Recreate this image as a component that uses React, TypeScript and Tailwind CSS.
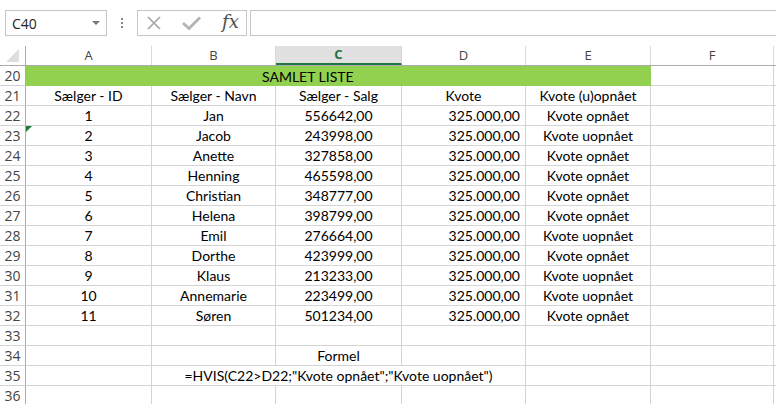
import React from 'react';

type Row = { id: number; name: string; sale: string; reached: boolean };

const rows: Row[] = [
  { id: 1, name: 'Jan', sale: '556642,00', reached: true },
  { id: 2, name: 'Jacob', sale: '243998,00', reached: false },
  { id: 3, name: 'Anette', sale: '327858,00', reached: true },
  { id: 4, name: 'Henning', sale: '465598,00', reached: true },
  { id: 5, name: 'Christian', sale: '348777,00', reached: true },
  { id: 6, name: 'Helena', sale: '398799,00', reached: true },
  { id: 7, name: 'Emil', sale: '276664,00', reached: false },
  { id: 8, name: 'Dorthe', sale: '423999,00', reached: true },
  { id: 9, name: 'Klaus', sale: '213233,00', reached: false },
  { id: 10, name: 'Annemarie', sale: '223499,00', reached: false },
  { id: 11, name: 'Søren', sale: '501234,00', reached: true },
];

const cell = 'h-full shrink-0 border-r border-b border-[#d4d4d4] flex items-center';
const uiFont = "font-['Open_Sans',sans-serif]";

function RowHead({ n }: { n: number }) {
  return (
    <div
      className={`${uiFont} w-[26px] h-full shrink-0 border-r border-r-[#ababab] border-b border-b-[#d4d4d4] flex items-center justify-center text-[14px] text-[#444]`}
    >
      {n}
    </div>
  );
}

function Tail() {
  return <div className="h-full flex-1 border-b border-[#d4d4d4]" />;
}

function FormulaBar() {
  return (
    <div className="h-[46px] relative flex items-start pt-[10px] pl-[5px]">
      <div className={`${uiFont} w-[102px] h-[26px] border border-[#c6c6c6] flex items-center justify-between pl-[6px] pr-[6px] text-[14px] text-[#222]`}>
        <span>C40</span>
        <svg width="8" height="4" viewBox="0 0 8 4">
          <path d="M0 0 L8 0 L4 4 Z" fill="#777" />
        </svg>
      </div>
      <div className="w-[30px] h-[26px] flex flex-col items-center justify-center gap-[2px]">
        <span className="w-[2px] h-[2px] bg-[#888]" />
        <span className="w-[2px] h-[2px] bg-[#888]" />
        <span className="w-[2px] h-[2px] bg-[#888]" />
      </div>
      <div className="w-[110px] h-[26px] border border-[#c6c6c6] flex items-center pl-[9px] gap-[21px]">
        <svg width="14" height="14" viewBox="0 0 14 14">
          <path d="M1 1 L13 13 M13 1 L1 13" stroke="#a6a6a6" strokeWidth="1.7" fill="none" />
        </svg>
        <svg width="19" height="14" viewBox="0 0 19 14">
          <path d="M1 7 L7 12.5 L18 1.5" stroke="#b4b4b4" strokeWidth="2.8" fill="none" />
        </svg>
        <span className="font-['DejaVu_Serif',serif] italic text-[18px] text-[#4d4d4d] leading-none -mt-[2px]">fx</span>
      </div>
      <div className="ml-[3px] flex-1 h-[26px] border-t border-b border-l border-[#c6c6c6]" />
    </div>
  );
}

function ColumnHeader() {
  const cols = [
    { l: 'A', w: 'w-[126px]' },
    { l: 'B', w: 'w-[124px]' },
    { l: 'C', w: 'w-[126px]' },
    { l: 'D', w: 'w-[124px]' },
    { l: 'E', w: 'w-[125px]' },
    { l: 'F', w: 'w-[123px]' },
  ];
  return (
    <div className={`${uiFont} flex h-[20px] border-b border-[#ababab] text-[13px] text-[#444]`}>
      <div className="w-[26px] h-full shrink-0 border-r border-[#ababab] flex items-end justify-center pb-[3px]">
        <svg width="13" height="13" viewBox="0 0 13 13">
          <path d="M13 0 L13 13 L0 13 Z" fill="#dedede" />
        </svg>
      </div>
      {cols.map((c) =>
        c.l === 'C' ? (
          <div
            key={c.l}
            className={`${c.w} h-full shrink-0 border-r border-[#d4d4d4] bg-[#e1e1e1] border-b-2 border-b-[#217346] flex items-center justify-center text-[#217346] font-bold`}
          >
            {c.l}
          </div>
        ) : (
          <div key={c.l} className={`${c.w} h-full shrink-0 border-r border-[#dadada] flex items-center justify-center`}>
            {c.l}
          </div>
        )
      )}
      <div className="flex-1" />
    </div>
  );
}

export default function App() {
  return (
    <div className="w-[776px] h-[404px] overflow-hidden bg-white font-['Lato',sans-serif] text-[14px] text-black">
      <FormulaBar />
      <ColumnHeader />

      <div className="flex h-[20px]">
        <RowHead n={20} />
        <div className="w-[625px] h-full shrink-0 bg-[#92d050] flex items-center pl-[236px]">SAMLET LISTE</div>
        <div className={`${cell} w-[123px]`} />
        <Tail />
      </div>

      <div className="flex h-[20px]">
        <RowHead n={21} />
        <div className={`${cell} w-[126px] justify-center`}>Sælger - ID</div>
        <div className={`${cell} w-[124px] justify-center`}>Sælger - Navn</div>
        <div className={`${cell} w-[126px] justify-center`}>Sælger - Salg</div>
        <div className={`${cell} w-[124px] justify-center`}>Kvote</div>
        <div className={`${cell} w-[125px] justify-center`}>Kvote (u)opnået</div>
        <div className={`${cell} w-[123px]`} />
        <Tail />
      </div>

      {rows.map((r, i) => (
        <div key={r.id} className="flex h-[20px]">
          <RowHead n={22 + i} />
          <div className={`${cell} w-[126px] justify-center relative`}>
            {r.id === 2 && (
              <svg className="absolute left-0 top-0" width="6" height="6" viewBox="0 0 6 6">
                <path d="M0 0 L6 0 L0 6 Z" fill="#1e7b34" />
              </svg>
            )}
            {r.id}
          </div>
          <div className={`${cell} w-[124px] justify-center`}>{r.name}</div>
          <div className={`${cell} w-[126px] justify-center`}>{r.sale}</div>
          <div className={`${cell} w-[124px] justify-end pr-[5px]`}>325.000,00</div>
          <div className={`${cell} w-[125px] justify-center`}>{r.reached ? 'Kvote opnået' : 'Kvote uopnået'}</div>
          <div className={`${cell} w-[123px]`} />
          <Tail />
        </div>
      ))}

      <div className="flex h-[20px]">
        <RowHead n={33} />
        <div className={`${cell} w-[126px]`} />
        <div className={`${cell} w-[124px]`} />
        <div className={`${cell} w-[126px]`} />
        <div className={`${cell} w-[124px]`} />
        <div className={`${cell} w-[125px]`} />
        <div className={`${cell} w-[123px]`} />
        <Tail />
      </div>

      <div className="flex h-[20px]">
        <RowHead n={34} />
        <div className={`${cell} w-[126px]`} />
        <div className={`${cell} w-[124px]`} />
        <div className={`${cell} w-[126px] justify-center`}>Formel</div>
        <div className={`${cell} w-[124px]`} />
        <div className={`${cell} w-[125px]`} />
        <div className={`${cell} w-[123px]`} />
        <Tail />
      </div>

      <div className="flex h-[20px]">
        <RowHead n={35} />
        <div className={`${cell} w-[126px]`} />
        <div className={`${cell} w-[374px] justify-center whitespace-nowrap`}>
          =HVIS(C22&gt;D22;"Kvote opnået";"Kvote uopnået")
        </div>
        <div className={`${cell} w-[125px]`} />
        <div className={`${cell} w-[123px]`} />
        <Tail />
      </div>

      <div className="flex h-[20px]">
        <RowHead n={36} />
        <div className={`${cell} w-[126px]`} />
        <div className={`${cell} w-[124px]`} />
        <div className={`${cell} w-[126px]`} />
        <div className={`${cell} w-[124px]`} />
        <div className={`${cell} w-[125px]`} />
        <div className={`${cell} w-[123px]`} />
        <Tail />
      </div>
    </div>
  );
}
